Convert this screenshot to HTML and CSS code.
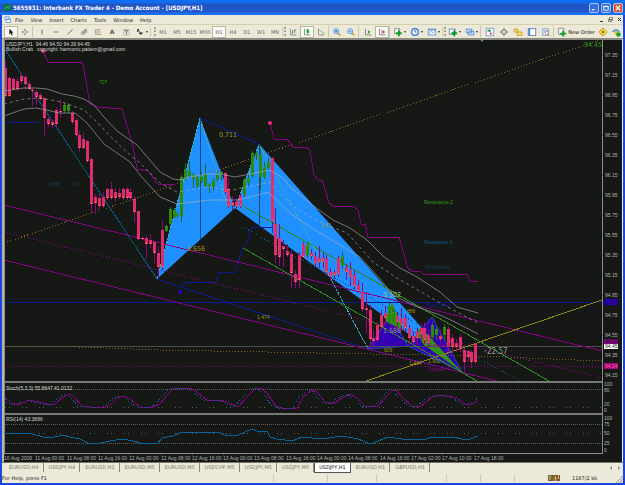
FILE: index.html
```html
<!DOCTYPE html>
<html lang="en">
<head>
<meta charset="utf-8">
<title>Interbank FX Trader 4</title>
<link rel="stylesheet" href="styles.css">
</head>
<body>
<div class="window">
  <header class="titlebar">
    <svg class="app-icon" viewBox="0 0 8 8"><rect width="8" height="8" fill="#0b6f4c"/><path d="M1 6L3 3L5 5L7 1" stroke="#35c66b" fill="none"/></svg>
    <h1 class="title">5655931: Interbank FX Trader 4 - Demo Account - [USDJPY,H1]</h1>
    <div class="captions">
      <button class="caption" aria-label="Minimize"><svg viewBox="0 0 9 9"><path d="M2 6.5H5" stroke="#fff" stroke-width="1.4"/></svg></button>
      <button class="caption" aria-label="Restore"><svg viewBox="0 0 9 9"><path d="M2 2.5H7V7H2ZM2 3H7" stroke="#fff" fill="none"/></svg></button>
      <button class="caption caption-close" aria-label="Close"><svg viewBox="0 0 9 9"><path d="M2 2L7 7M7 2L2 7" stroke="#fff" stroke-width="1.4"/></svg></button>
    </div>
  </header>

  <nav class="menubar">
    <svg class="doc-icon" viewBox="0 0 8 8"><path d="M1 1H6V4H1ZM2.500 3.500H7.500V7.500H2.500Z" fill="#fff" stroke="#5a94e0"/></svg>
    <button>File</button><button>View</button><button>Insert</button><button>Charts</button><button>Tools</button><button>Window</button><button>Help</button>
    <div class="mdi">
      <button aria-label="Minimize chart"><svg viewBox="0 0 7 7"><path d="M2 5.500H5" stroke="#333"/></svg></button>
      <button aria-label="Restore chart"><svg viewBox="0 0 7 7"><path d="M2.500 1.500H5.500V4H2.500ZM1.500 3.500H4.500V5.500H1.500Z" fill="#f4f2e8" stroke="#555" stroke-width=".7"/></svg></button>
      <button aria-label="Close chart"><svg viewBox="0 0 7 7"><path d="M2 2L5 5M5 2L2 5" stroke="#333"/></svg></button>
    </div>
  </nav>

  <div class="toolbar">
    <div class="group group-first">
      <button class="tool on" aria-label="Cursor"><svg viewBox="0 0 12 12"><path d="M4 2V9L5.800 7.500L7 10.500L8 10L7 7H9Z" fill="#111"/></svg></button>
      <button class="tool" aria-label="Crosshair"><svg viewBox="0 0 12 12"><path d="M6 2V5M6 7V10M2 6H5M7 6H10" stroke="#555"/></svg></button>
    </div>
    <i class="sep wide"></i>
    <div class="group">
      <button class="tool" aria-label="Vertical line"><svg viewBox="0 0 12 12"><path d="M6 3V9" stroke="#555"/></svg></button>
      <button class="tool" aria-label="Horizontal line"><svg viewBox="0 0 12 12"><path d="M3 6H9" stroke="#777"/></svg></button>
      <button class="tool" aria-label="Trendline"><svg viewBox="0 0 12 12"><path d="M3 9L9 3" stroke="#555"/></svg></button>
      <button class="tool" aria-label="Channel"><svg viewBox="0 0 12 12"><path d="M2 8L9 2M3 10L10 4M4 5L7 9M7 3L9 7" stroke="#555" stroke-width=".8"/></svg></button>
      <button class="tool" aria-label="Fibonacci"><svg viewBox="0 0 12 12"><path d="M3 3H9M3 5H9M3 7H9M3 9H9M3 3V9" stroke="#8b866c" stroke-width=".7"/><path d="M8 9H10" stroke="#c90"/></svg></button>
      <button class="tool letter" aria-label="Text">A</button>
      <button class="tool" aria-label="Text label"><svg viewBox="0 0 12 12"><rect x="3" y="3" width="7" height="7" fill="none" stroke="#999" stroke-dasharray="1"/><path d="M4 4.500H9M6.500 4.500V9" stroke="#555"/></svg></button>
      <button class="tool drop" aria-label="Arrows"><svg viewBox="0 0 12 12"><path d="M3 4L6 6M3 6V3H5M5 7H9L7 9Z" stroke="#333" fill="#333"/></svg></button>
    </div>
    <i class="grip"></i>
    <div class="group periods">
      <button class="tool">M1</button><button class="tool">M5</button><button class="tool">M15</button><button class="tool">M30</button><button class="tool on">H1</button><button class="tool">H4</button><button class="tool">D1</button><button class="tool">W1</button><button class="tool">MN</button>
    </div>
    <i class="grip slim"></i>
    <div class="group">
      <button class="tool" aria-label="Bar chart"><svg viewBox="0 0 12 12"><path d="M3 2V9.500H10" stroke="#667" fill="none" stroke-width=".8"/><path d="M5.500 4V8M8 3V7M5 7H6M8 4H9" stroke="#2a8a30"/></svg></button>
      <button class="tool on" aria-label="Candlesticks"><svg viewBox="0 0 12 12"><path d="M3 2V9.500H10" stroke="#667" fill="none" stroke-width=".8"/><path d="M7 2V9" stroke="#186a18" stroke-width=".7"/><rect x="5.500" y="3" width="3" height="4" fill="#15b52a"/></svg></button>
      <button class="tool" aria-label="Line chart"><svg viewBox="0 0 12 12"><path d="M3 2V9.500H10" stroke="#667" fill="none" stroke-width=".8"/><path d="M4 4Q6 4 7 6T10 7" stroke="#559a55" fill="none" stroke-width=".8"/></svg></button>
    </div>
    <i class="sep"></i>
    <div class="group">
      <button class="tool" aria-label="Zoom in"><svg viewBox="0 0 12 12"><path d="M7 7L10 10" stroke="#cfa52c" stroke-width="2"/><circle cx="5" cy="5" r="3" fill="#cfe6ff" stroke="#478ee0"/><path d="M3.500 5H6.500M5 3.500V6.500" stroke="#1b5fc0"/></svg></button>
      <button class="tool" aria-label="Zoom out"><svg viewBox="0 0 12 12"><path d="M7 7L10 10" stroke="#cfa52c" stroke-width="2"/><circle cx="5" cy="5" r="3" fill="#cfe6ff" stroke="#478ee0"/><path d="M3.500 5H6.500" stroke="#1b5fc0"/></svg></button>
    </div>
    <i class="sep wide"></i>
    <div class="group">
      <button class="tool" aria-label="Auto scroll"><svg viewBox="0 0 12 12"><path d="M3 2V9.500H10" stroke="#556" fill="none" stroke-width=".8"/><path d="M6 4L9 6L6 8Z" fill="#18a02c"/></svg></button>
      <button class="tool on" aria-label="Chart shift"><svg viewBox="0 0 12 12"><path d="M3 2V9.500H10M6 3V8" stroke="#556" fill="none" stroke-width=".8"/><path d="M7 4L10 6L7 8Z" fill="#d33b2a"/></svg></button>
    </div>
    <i class="sep"></i>
    <div class="group">
      <button class="tool drop" aria-label="Indicators"><svg viewBox="0 0 12 12"><path d="M2 2H8V8H2Z" fill="#fff" stroke="#778"/><path d="M7 4V11M3.500 7.500H10.500" stroke="#0a9c1d" stroke-width="2.200"/></svg></button>
      <button class="tool drop" aria-label="Periods"><svg viewBox="0 0 12 12"><circle cx="6" cy="6" r="4" fill="#eef6ff" stroke="#2e72d2" stroke-width="1.500"/><path d="M6 3.500V6H8" stroke="#334" fill="none" stroke-width=".8"/></svg></button>
      <button class="tool drop" aria-label="Templates"><svg viewBox="0 0 12 12"><rect x="1.500" y="2.500" width="9" height="7" fill="#eef6ff" stroke="#5a90d0"/><path d="M2 3.500H10" stroke="#3b7bd0"/><path d="M3 8L5 5L7 7L9 5" stroke="#b66" fill="none" stroke-width=".7"/></svg></button>
    </div>
    <i class="grip slim"></i>
    <div class="group">
      <button class="tool drop" aria-label="New chart"><svg viewBox="0 0 12 12"><rect x="1.500" y="2.500" width="7" height="6" fill="#fff" stroke="#5582b8"/><path d="M7.500 4V11M4 7.500H11" stroke="#0a9c1d" stroke-width="2.200"/></svg></button>
      <button class="tool drop" aria-label="Profiles"><svg viewBox="0 0 12 12"><path d="M1.500 2.500H8V7H1.500ZM4 5H10.500V9.500H4Z" fill="#d8eaff" stroke="#4a80cc"/></svg></button>
    </div>
    <i class="sep wide"></i>
    <div class="group">
      <button class="tool" aria-label="Market watch"><svg viewBox="0 0 12 12"><rect x="1.500" y="1.500" width="9" height="9" fill="#fff" stroke="#6b9ad8"/><path d="M3 5L5 3L7 5Z" fill="#1a9b30" stroke="#1a9b30"/><path d="M5 7H9L7 9.500Z" fill="#d33"/></svg></button>
      <button class="tool" aria-label="Data window"><svg viewBox="0 0 12 12"><circle cx="6" cy="6" r="3" fill="none" stroke="#777"/><path d="M6 1V5M6 7V11M1 6H5M7 6H11" stroke="#777"/></svg></button>
      <button class="tool" aria-label="Navigator"><svg viewBox="0 0 12 12"><path d="M1.500 2.500H6V6H1.500ZM5 6H10.500V10H5Z" fill="#ffe27a" stroke="#c59413"/></svg></button>
      <button class="tool" aria-label="Terminal"><svg viewBox="0 0 12 12"><rect x="1.500" y="2" width="9" height="8" fill="#fff" stroke="#3f79c8"/><path d="M3 2V10" stroke="#3f79c8" stroke-width="1.500"/></svg></button>
      <button class="tool" aria-label="Strategy tester"><svg viewBox="0 0 12 12"><rect x="2" y="2" width="7" height="8" fill="#e7edf5" stroke="#8ba3c0"/><path d="M3 4H8M3 6H6" stroke="#8ba3c0"/><circle cx="7" cy="7" r="2" fill="#fff" stroke="#889"/><path d="M8.500 8.500L11 11" stroke="#c59413"/></svg></button>
    </div>
    <i class="sep wide"></i>
    <button class="tool order"><svg viewBox="0 0 12 12"><path d="M2 1.500H8V9H2Z" fill="#fff" stroke="#778"/><path d="M7.500 4.500V11.500M4 8H11" stroke="#0a9c1d" stroke-width="2.200"/></svg>New Order</button>
    <button class="tool" aria-label="Editor"><svg viewBox="0 0 12 12"><path d="M6 1L11 6L6 11L1 6Z" fill="#ffdb45" stroke="#c08f10"/><path d="M5 4L8 6L5 8Z" fill="#6b5205"/></svg></button>
    <button class="tool last" aria-label="Expert advisors"><svg viewBox="0 0 12 12"><path d="M1 6Q6 -1 11 6Z" fill="#4b93df"/><circle cx="6" cy="7" r="2.500" fill="#f0c64a"/><circle cx="9" cy="9" r="2.800" fill="#18a32c"/></svg></button>
  </div>

  <main class="chart">
    <svg id="chart" viewBox="4 39 618 423" role="img" aria-label="USDJPY hourly chart">
      <defs><clipPath id="plot"><rect x="4" y="40" width="598" height="341"/></clipPath></defs>
      <g clip-path="url(#plot)">
        <g class="shape-blue">
          <path d="M200 118L157 279L235 208Z"/>
          <path d="M259 144L235 208L461 372Z"/>
        </g>
        <path class="shape-purple" d="M368 349L390 315L408 346ZM408 346L432 317L462 372Z"/>
        <path class="shape-green" d="M392 302L385 321L403 330ZM420 328L427 334L462 372L424 345L416 333Z"/>

        <g class="line">
          <path class="navy" d="M4 302H602M4 122H39M200 118L259 144M157 279L368 349L461 372M180 292L185 282H216L219 272H235L243 247L247 243L252 227H273"/>
          <path class="bid" d="M4 346H602"/>
          <path class="magenta" d="M4 205L602 351M4 260L497 381"/>
          <path class="magenta dots" d="M4 232L602 378M4 366H602"/>
          <path class="brown dots" d="M4 243L602 39M4 346H50L160 350L478 356L602 361"/>
          <path class="olive" d="M366 381L602 300"/>
          <path class="green" d="M243 206L549 381M243 248L477 381"/>
          <path class="teal" d="M4 48L157 279"/>
          <path class="teal dots" d="M243 227L520 381M340 297L368 349"/>
          <path class="cyan" d="M157 279L200 118L228 208M235 208L259 144L368 349"/>
          <path class="drop-line" d="M200 118V240M259 144V225"/>
          <path class="magenta" d="M43 51L48 62H80L83 64L90 104L98 107L122 109L133 146L137 169L148 171L158 184H175M270 123L274 139H287L293 147H307L310 151L314 175L318 180H322L329 203L333 206H353L358 210L361 224H365L368 237H399L408 268L412 271H420L423 274H467L470 281H478"/>
        </g>
        <g id="candles" class="candles"></g>
        <g class="bands">
          <path d="M4 91L24 88L36 88L47 89L62 94L74 96L84 99L94 105L104 117L117 131L137 145L160 172L173 179L180 180L190 177L207 174L220 174L235 177L250 174L270 170L283 178L290 187L315 207L333 220L350 228L367 240L383 256L400 268L417 277L440 292L457 307L478 313"/>
          <path class="dash" d="M4 104L24 99L40 98L62 102L84 110L97 122L110 136L130 155L140 163L160 183L177 192L207 187L233 190L270 182L290 204L315 220L347 233L373 262L397 278L440 303L478 323"/>
          <path d="M4 116L24 109L36 108L47 110L59 113L75 113L87 123L104 144L130 162L140 175L160 197L177 204L210 200L237 200L250 197L268 192L290 213L310 227L337 243L360 257L380 279L393 295L417 307L440 315L457 323L478 334"/>
        </g>
        <g><circle class="pink-dot" cx="43" cy="51" r="2"/><circle class="pink-dot" cx="270" cy="123" r="2"/><circle class="pivot-dot" cx="180" cy="292" r="2"/></g>
        <path d="M480 39H484L482 42Z" fill="#8294a0"/>
      </g>

      <g class="small">
        <text class="t-white" x="6" y="46">USDJPY,H1&#160; 94.46 94.50 94.39 94.45</text>
        <text class="t-white" x="6" y="51">Bullish Crab</text>
        <text class="t-white" x="37" y="51">copyright: harmonic.pattern@gmail.com</text>
        <text class="t-green" x="99" y="84">707</text>
        <text class="t-dim" x="47" y="186">0.886</text>
        <text class="t-dim" x="71" y="186">1.27</text>
        <text class="t-olive" x="257" y="319">1.474</text>
        <text class="t-olive" x="321" y="227">1.12</text>
        <text class="t-olive" x="407" y="313">886</text>
        <text class="t-olive" x="384" y="352">609</text>
        <text class="t-olive" x="409" y="365">1.414</text>
        <text class="t-olive" x="428" y="363">1.902</text>
        <text class="t-green" x="424" y="204">Resistance 2</text>
        <text class="t-teal" x="424" y="244">Resistance 1</text>
        <text class="t-dim" x="425" y="269">Resistance</text>
        <text class="t-navy" x="426" y="307">Pivot Level</text>
        <text class="t-magenta" x="428" y="347">Support 1</text>
        <text class="t-magenta" x="428" y="371">Support 2</text>
        <text class="t-gray" x="484" y="353">&lt;</text>
      </g>
      <g class="ratio">
        <text class="t-olive" x="219" y="137">0.711</text>
        <text class="t-olive" x="187" y="251">0.656</text>
        <text class="t-lime" x="383" y="297">3.502</text>
        <text class="t-gray" x="383" y="333">1.568</text>
        <text class="t-green" x="584" y="47">94.45</text>
      </g>
      <text class="price t-gray" x="487" y="354">22.57</text>

      <path class="separator" d="M4 382H602M4 414H602"/>
      <path class="frame" d="M4.500 39V453.500H602.500V39M4 39.500H622"/>
      <g id="levels" class="levels"></g>
      <g class="line">
        <polyline id="signal" class="magenta"/>
        <polyline id="stoch" class="osc dots"/>
        <polyline id="rsi" class="osc"/>
      </g>
      <g class="small">
        <text class="t-white" x="6" y="390">Stoch(5,3,3) 55.8847 41.0132</text>
        <text class="t-white" x="6" y="421">RSI(14) 43.3886</text>
        <g id="prices" class="t-axis"></g>
        <g id="times" class="t-axis"></g>
        <rect x="604" y="299" width="14" height="6" fill="#2b00b0"/><text x="605" y="304" class="t-dark">94.88</text>
        <rect x="604" y="339" width="14" height="5" fill="#7d0880"/><text x="605" y="343" class="t-shade">94.50</text>
        <rect x="604" y="344" width="14" height="5" fill="#fff"/><text x="605" y="348" class="t-black">94.45</text>
        <rect x="604" y="363" width="14" height="6" fill="#a8007f"/><text x="605" y="368" class="t-pink">94.24</text>
      </g>
    </svg>
  </main>

  <nav class="tabs">
    <a href="#chart">EURUSD,H4</a><a href="#chart">USDJPY,H4</a><a href="#chart">EURUSD,H1</a><a href="#chart">EURUSD,M5</a><a href="#chart">EURUSD,M5</a><a href="#chart">USDCHF,M5</a><a href="#chart">USDJPY,M5</a><a href="#chart">USDJPY,M5</a><a class="active" href="#chart">USDJPY,H1</a><a href="#chart">EURUSD,H1</a><a href="#chart">GBPUSD,H1</a>
    <div class="scrollers">
      <button aria-label="Scroll left"><svg viewBox="0 0 8 8"><path d="M5 2V6L3 4Z" fill="#888"/></svg></button>
      <button aria-label="Scroll right"><svg viewBox="0 0 8 8"><path d="M3 2V6L5 4Z" fill="#888"/></svg></button>
    </div>
  </nav>

  <footer class="status">
    <span class="help">For Help, press F1</span>
    <i class="cell w54"></i><i class="cell w49"></i><i class="cell w70"></i><i class="cell w34"></i><i class="cell w34"></i><i class="cell w34"></i>
    <span class="traffic">
      <svg viewBox="0 0 12 6"><rect width="12" height="6" fill="#8a3f35"/><path d="M1 0V6M3 0V4M6 0V6M9 2V6" stroke="#44b43a"/><path d="M2 1V5M7.500 1V6M10.500 0V4" stroke="#e6c04c"/><path d="M4.500 2V6M11.500 3V6" stroke="#cf3562"/></svg>
      <span>1187/2 kb</span>
    </span>
    <svg class="resize" viewBox="0 0 8 8"><path d="M1 8L8 1M4 8L8 4M6.500 8L8 6.500" stroke="#9c9885"/></svg>
  </footer>
</div>
<script src="chart.js"></script>
</body>
</html>
```
FILE: styles.css
```css
* { box-sizing: border-box; }

body {
  margin: 0;
  background: #ece9d8;
  color: #222;
  font: 5px/8px "DejaVu Sans", "Liberation Sans", sans-serif;
}

button {
  margin: 0;
  padding: 0;
  border: 0;
  background: none;
  color: inherit;
  font: inherit;
}

svg { display: block; }

.window {
  display: flex;
  flex-direction: column;
  min-height: 100vh;
  border: solid #1d45e0;
  border-width: 0 2px 2px;
}

.titlebar {
  display: flex;
  align-items: center;
  height: 15px;
  margin: 0 -2px;
  padding: 0 2px 0 4px;
  background: linear-gradient(#0f6df2 0 3px, #2254c0 4px, #2057cc 12px, #1670f4 13px);
  color: #fff;
}

.app-icon { width: 7px; height: 7px; }

.title {
  flex: 1;
  margin: 0 0 0 2px;
  font: bold 6px/10px "DejaVu Sans Condensed", "DejaVu Sans", sans-serif;
  white-space: nowrap;
}

.captions { display: flex; gap: 2px; }

.caption {
  width: 10px;
  height: 10px;
  border: 1px solid #a9c4f5;
  border-radius: 2px;
  background: #3570e0;
}

.caption-close { background: #e0502c; }

.menubar {
  display: flex;
  align-items: center;
  gap: 7px;
  height: 10px;
  padding-left: 2px;
  border-bottom: 1px solid #d3d0ae;
}

.doc-icon { width: 7px; height: 7px; margin-right: -3px; }

.mdi { display: flex; gap: 2px; margin-left: auto; }
.mdi svg { width: 7px; height: 7px; }

.toolbar {
  display: flex;
  align-items: center;
  height: 14px;
  border-bottom: 1px solid #8d8b7c;
  white-space: nowrap;
}

.group { display: flex; }
.group-first { padding-left: 2px; }

.tool {
  display: flex;
  flex: none;
  align-items: center;
  justify-content: center;
  width: 14px;
  height: 12px;
}

.tool svg { flex: none; width: 10px; height: 10px; }
.letter { color: #555; font-size: 6px; font-weight: bold; }
.on { border: 1px solid #bbb79f; background: #faf9f3; }
.periods { color: #666; }

.drop { width: 17px; gap: 1px; }

.drop::after {
  border: solid transparent;
  border-width: 2px 1px 0;
  border-top-color: #333;
  content: "";
}

.order { width: 40px; gap: 1px; color: #111; }
.last { width: 11px; }

.sep { width: 2px; height: 11px; border-left: 1px solid #c9c5ad; }
.wide { width: 3px; }

.grip { width: 6px; height: 9px; border-left: 1px solid #d0ccb4; border-right: 2px dotted #a8a48e; }
.slim { width: 4px; }

.chart {
  border: solid #b8b6a8;
  border-width: 0 1px 0 2px;
  border-right-color: #f4f2e8;
  background: #151814;
}

.chart svg { width: 100%; height: auto; }

.shape-blue { fill: #1e90ff; }
.shape-purple { fill: #3300b4; stroke: #2448c8; }
.shape-green { fill: #2f9410; }

.line { fill: none; stroke-width: 1; }
.line, .candles, .levels { shape-rendering: crispEdges; }
.navy { stroke: #0a1c8c; }
.bid { stroke: #4c4e4a; }
.magenta { stroke: #850285; }
.brown { stroke: #84601f; }
.olive { stroke: #8e8418; }
.green { stroke: #2b8a20; }
.teal { stroke: #07587c; }
.cyan { stroke: #39a9c0; stroke-dasharray: 3 1; }
.drop-line { stroke: #134a74; }
.osc { stroke: #07659c; }
.dots { stroke-dasharray: 1 2; }

.bands { fill: none; stroke: #b3b6b6; stroke-width: 1; opacity: .6; }
.dash { stroke-dasharray: 3 3; }

.candle-down { fill: #e02d70; }
.candle-up { fill: #2c8a0a; }
.wick-down { fill: #8b077d; }
.wick-up { fill: #206c14; }
.tip { fill: #f2a818; }
.tip-up { fill: #20b080; }
.pink-dot { fill: #e83078; }
.pivot-dot { fill: #3000c0; }

.separator { stroke: #777977; stroke-width: 2; }
.frame { fill: none; stroke: #8a8c8a; stroke-width: 1; }
.levels { stroke: #5b5e5a; stroke-dasharray: 1 1; }

.small { font-family: "Liberation Sans", sans-serif; font-size: 5px; }
.ratio, .price { font-family: "DejaVu Sans Condensed", "DejaVu Sans", sans-serif; }
.ratio { font-size: 7px; }
.price { font-size: 8px; }
.t-white { fill: #d4d6d2; }
.t-axis { fill: #b2b4b0; }
.t-gray { fill: #989b98; }
.t-green { fill: #399c16; }
.t-lime { fill: #a2c878; }
.t-olive { fill: #a09618; }
.t-teal { fill: #07608c; }
.t-dim { fill: #153c52; }
.t-navy { fill: #0f1ca0; }
.t-magenta { fill: #8a0686; }
.t-dark { fill: #1a0470; }
.t-shade { fill: #250826; }
.t-black { fill: #111; }
.t-pink { fill: #ff6a9c; }

.tabs {
  display: flex;
  height: 11px;
  padding-left: 2px;
  border-top: 1px solid #77756a;
  color: #7d7a6a;
  line-height: 9px;
}

.tabs a {
  height: 9px;
  padding: 0 4px 0 5px;
  border-right: 1px solid #8c8978;
  color: inherit;
  text-decoration: none;
}

.tabs .active {
  height: 10px;
  padding: 0 4px;
  border: 1px solid #555;
  border-top: 0;
  background: #fff;
  color: #111;
}

.scrollers { display: flex; margin-left: auto; }
.scrollers svg { width: 8px; height: 8px; }

.status {
  display: flex;
  flex: 1;
  align-items: center;
  min-height: 10px;
  color: #222;
}

.help { flex: 1; }
.cell { height: 8px; border-left: 1px solid #d0cdb4; }
.w54 { width: 54px; }
.w49 { width: 49px; }
.w70 { width: 70px; }
.w34 { width: 34px; }

.traffic { display: flex; align-items: center; gap: 12px; width: 67px; }
.traffic svg { width: 12px; height: 6px; }
.resize { align-self: flex-end; width: 8px; height: 8px; }
```
FILE: chart.js
```js
const NS = "http://www.w3.org/2000/svg";

function add(parent, name, attrs, text) {
  const node = document.createElementNS(NS, name);
  for (const key in attrs) node.setAttribute(key, attrs[key]);
  if (text) node.textContent = text;
  parent.appendChild(node);
}

// One bar per hour: direction, body top, body bottom, wick top, wick bottom.
const bars = `d68,96,60,98 d78,96,76,97 d79,89,77,90 d81,89,78,91 d76,81,73,84 d77,84,75,90 d84,89,81,90 d90,91,88,106
d92,97,90,105 d95,99,93,100 d98,118,97,136 d119,124,117,127 d122,125,120,128 d110,124,107,128 d111,112,99,118 u105,111,103,113
u105,111,103,113 d113,122,111,124 d120,135,118,137 d135,148,131,152 d139,148,133,149 d141,161,140,163 d159,204,158,213 d197,203,194,214
d198,206,194,209 d197,206,192,208 d189,198,188,200 d189,198,182,200 d192,198,188,202 d193,197,188,199 d189,198,188,200 d189,198,187,200
d192,198,188,200 d199,212,196,222 d211,239,211,240 d238,239,236,240 d238,244,235,259 d240,244,234,248 d242,253,241,263 d253,267,246,278
d230,267,221,270 u226,231,225,232 u209,224,207,226 u210,217,208,218 u214,216,212,218 u177,216,175,222 u169,178,163,180 u171,176,161,178
u175,179,173,188 u177,186,175,188 u176,181,172,183 u174,186,164,187 u184,186,183,193 u180,187,178,191 u174,179,172,181 u172,174,171,180
d173,192,172,194 d189,206,178,208 d202,205,196,210 d202,206,198,208 d196,206,194,208 u180,195,178,197 u178,183,174,186 u153,176,151,178
u153,155,151,160 u155,177,148,190 u167,177,162,179 u162,168,158,170 d158,221,157,233 d224,255,208,263 d238,257,224,266 d246,249,240,268
d251,255,244,257 d254,273,250,288 d274,282,270,288 d255,280,252,288 d244,257,242,258 u245,255,242,258 d253,256,249,260 d256,263,252,266
d258,262,246,268 d258,261,252,268 d259,272,255,276 d272,276,268,280 d272,275,270,279 d258,274,256,277 u256,265,252,269 d267,272,264,280
d270,277,262,286 d275,286,270,289 d285,291,280,293 d292,309,283,312 d308,310,292,334 d310,339,305,348 d338,341,330,345 d325,340,322,342
d315,327,310,330 d313,318,306,325 u306,318,303,325 u312,320,308,322 d316,322,312,330 d318,325,308,332 d318,328,314,332 d328,338,325,344
d336,342,332,346 d332,338,328,345 d328,334,324,340 d328,340,322,344 d335,343,330,347 u325,337,322,340 u329,335,326,340 d336,339,330,344
u327,335,324,340 d329,347,326,352 d338,347,334,353 d343,347,339,352 d337,349,334,352 d350,362,348,372 d351,357,350,362 d352,362,350,368 d344,362,342,364`;

const candles = document.getElementById("candles");
bars.split(/\s+/).forEach((bar, i) => {
  const kind = bar[0] === "u" ? "up" : "down";
  const [top, bottom, high, low] = bar.slice(1).split(",").map(Number);
  const x = Math.round(4 + i * 3.92);
  add(candles, "rect", { class: "wick-" + kind, x: x + 1, y: high, width: 1, height: low - high });
  add(candles, "rect", { class: "candle-" + kind, x, y: top, width: 3, height: bottom - top });
  add(candles, "rect", { class: kind === "up" ? "tip-up" : "tip", x: x + 1, y: kind === "up" ? top : bottom - 1, width: 1, height: 1 });
});

const prices = document.getElementById("prices");
const frame = document.getElementById("levels");
for (let i = 0; i < 17; i++) {
  add(prices, "text", { x: 605, y: 57 + i * 20 }, (97.35 - i * 0.2).toFixed(2));
  add(frame, "path", { d: `M602 ${55.5 + i * 20}h2` });
}
[["100", 386], ["80", 392], ["20", 406], ["0", 412], ["100", 420], ["75", 426], ["50", 435], ["25", 445], ["0", 452]]
  .forEach(([label, y]) => add(prices, "text", { x: 604, y }, label));
[389.5, 407.5, 424.5, 433.5, 443.5].forEach((y, i) =>
  add(frame, "path", { d: `M5 ${y}H602`, "stroke-dasharray": i === 1 || i === 3 ? "1 3 1 12" : "1 1" }));

const times = document.getElementById("times");
["10 Aug 2009", "11 Aug 00:00", "11 Aug 08:00", "11 Aug 16:00", "12 Aug 00:00", "12 Aug 08:00", "12 Aug 16:00", "13 Aug 00:00",
  "13 Aug 08:00", "13 Aug 16:00", "14 Aug 00:00", "14 Aug 08:00", "14 Aug 16:00", "17 Aug 02:00", "17 Aug 10:00", "17 Aug 18:00"]
  .forEach((label, i) => {
    const x = Math.round(4 + i * 31.3);
    add(times, "text", { x, y: 460 }, label);
    add(frame, "path", { d: `M${x + 0.5} 454v2` });
  });

const signal = [[4,396],[10,402],[17,405],[30,400],[47,404],[55,404],[62,398],[69,394],[73,396],[82,406],[90,407],[103,408],[110,405],
  [117,398],[123,396],[130,399],[140,407],[150,408],[160,404],[167,395],[173,389],[190,388],[197,392],[208,401],[220,400],[227,402],
  [238,407],[247,397],[255,389],[260,388],[267,393],[275,405],[283,409],[297,408],[303,397],[312,390],[317,392],[325,402],[333,404],
  [342,398],[350,394],[357,398],[365,406],[377,407],[385,398],[392,391],[396,390],[403,398],[412,406],[420,407],[432,397],[442,395],
  [457,398],[465,404],[470,405],[478,401]];
const rsi = [[4,433],[24,433],[33,434],[43,437],[50,438],[63,435],[70,437],[80,439],[88,443],[100,443],[110,441],[123,439],[133,441],
  [140,443],[157,444],[162,438],[173,436],[182,432],[208,433],[218,432],[227,436],[238,435],[252,429],[260,432],[267,431],[270,437],
  [277,439],[292,441],[302,437],[322,439],[342,436],[358,439],[370,444],[378,441],[388,437],[402,439],[423,440],[432,437],[442,438],
  [453,437],[462,439],[470,439],[478,436]];
const fast = signal.map(([x, y]) => [Math.max(5, x - 4), y]).concat([[478, 398]]);
document.getElementById("signal").setAttribute("points", signal.join(" "));
document.getElementById("stoch").setAttribute("points", fast.join(" "));
document.getElementById("rsi").setAttribute("points", rsi.join(" "));
```
